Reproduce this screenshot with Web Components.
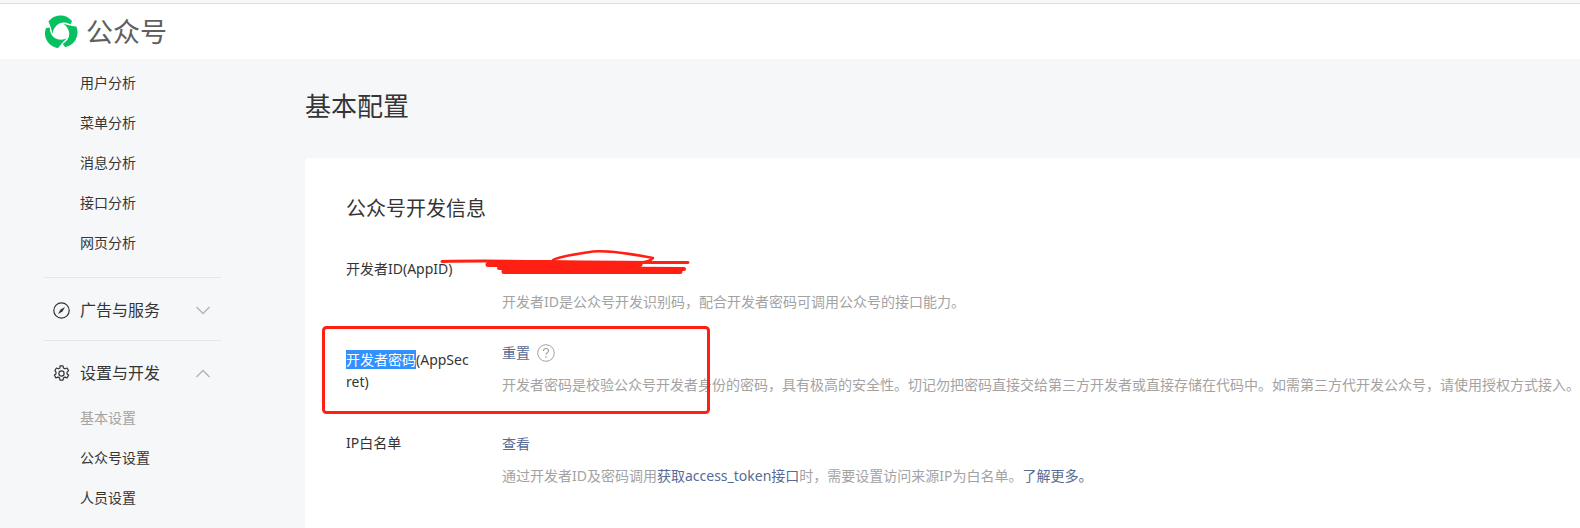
<!DOCTYPE html>
<html lang="zh">
<head>
<meta charset="utf-8">
<title>基本配置</title>
<style>
    html, body {
        margin: 0;
        width: 1580px;
        height: 528px;
        overflow: hidden;
        background: #f6f7f9;
        font-family: "Noto Sans", "Noto Sans CJK SC", sans-serif;
    }
</style>
</head>
<body>
<wx-app></wx-app>

<script>
const FONT = '"Noto Sans", "Noto Sans CJK SC", sans-serif';

class WxHeader extends HTMLElement {
    constructor() {
        super();
        this.attachShadow({ mode: 'open' });
        const swoosh = 'M8.500 19C7.500 14 6 10 4.500 6.500 8 2 12.500 .5 17 .5c4.500 0 8 2 11 5.500l-1.500 3.500C21 6.500 16 7 12.500 10.500 10 13 8.800 16 8.500 19z';
        this.shadowRoot.innerHTML = `
            <style>
                :host {
                    display: flex;
                    align-items: center;
                    box-sizing: border-box;
                    height: 56px;
                    margin-top: 3px;
                    padding: 0 0 0 44px;
                    gap: 8px;
                    background: #fff;
                    border-top: 1px solid #dcdcdc;
                }
                svg { width: 34px; height: 34px; display: block; }
                span { font: 27px/34px ${FONT}; color: #5f5f5f; }
            </style>
            <svg viewBox="0 0 34 34" fill="#07c160">
                <path d="${swoosh}"/>
                <path d="${swoosh}" transform="rotate(120 17 17)"/>
                <path d="${swoosh}" transform="rotate(240 17 17)"/>
                <path d="M7 21l8 6-7 3z"/>
            </svg>
            <span>公众号</span>
        `;
    }
}

class WxNavItem extends HTMLElement {
    constructor() {
        super();
        this.attachShadow({ mode: 'open' });
        this.shadowRoot.innerHTML = `
            <style>
                :host {
                    display: block;
                    height: 40px;
                    padding-left: 80px;
                    font: 14px/40px ${FONT};
                    color: #353535;
                }
                :host([current]) { color: #a3a3a3; }
            </style>
            <slot></slot>
        `;
    }
}

class WxNavGroup extends HTMLElement {
    constructor() {
        super();
        this.attachShadow({ mode: 'open' });
        const up = this.hasAttribute('open');
        this.shadowRoot.innerHTML = `
            <style>
                :host {
                    display: flex;
                    align-items: center;
                    height: 32px;
                    margin-left: 53px;
                    width: 158px;
                    font: 16px/32px ${FONT};
                    color: #353535;
                }
                ::slotted(svg) { width: 17px; height: 17px; margin-right: 10px; flex: none; }
                .label { flex: 1; }
                .chev { width: 16px; height: 9px; flex: none; }
            </style>
            <slot name="icon"></slot>
            <span class="label"><slot></slot></span>
            <svg class="chev" viewBox="0 0 16 9" fill="none" stroke="#b5b5b5" stroke-width="1.500">
                <path d="${up ? 'M1.500 8L8 1.500 14.500 8' : 'M1.500 1L8 7.500 14.500 1'}"/>
            </svg>
        `;
    }
}

class WxSidebar extends HTMLElement {
    constructor() {
        super();
        this.attachShadow({ mode: 'open' });
        this.shadowRoot.innerHTML = `
            <style>
                :host {
                    display: block;
                    flex: none;
                    width: 305px;
                    padding-top: 4px;
                }
                hr {
                    margin: 14px 0 0 44px;
                    width: 177px;
                    height: 1px;
                    border: 0;
                    background: #e4e6e8;
                }
                .group { margin-top: 16px; }
                .subs { margin-top: 9px; }
            </style>
            <wx-nav-item>用户分析</wx-nav-item>
            <wx-nav-item>菜单分析</wx-nav-item>
            <wx-nav-item>消息分析</wx-nav-item>
            <wx-nav-item>接口分析</wx-nav-item>
            <wx-nav-item>网页分析</wx-nav-item>
            <hr>
            <div class="group">
                <wx-nav-group>
                    <svg slot="icon" viewBox="0 0 17 17" fill="none" stroke="#353535" stroke-width="1.200">
                        <circle cx="8.500" cy="8.500" r="7.700"/>
                        <path d="M12 5L9.500 9.500 5 12 7.500 7.500z" fill="#353535" stroke="none"/>
                    </svg>
                    广告与服务
                </wx-nav-group>
            </div>
            <hr>
            <div class="group">
                <wx-nav-group open>
                    <svg slot="icon" viewBox="0 0 17 17" fill="none" stroke="#353535" stroke-width="1.200">
                        <circle cx="8.500" cy="8.500" r="2.600"/>
                        <path d="M7 .8h3l.5 2.200 1.500.8 2.100-.8 1.500 2.600-1.600 1.500v1.700l1.600 1.500-1.500 2.600-2.100-.8-1.500.8-.5 2.200H7l-.5-2.200-1.500-.8-2.100.8-1.500-2.600 1.600-1.500V7.100L1.900 5.600l1.500-2.600 2.100.8 1.500-.8z" stroke-linejoin="round"/>
                    </svg>
                    设置与开发
                </wx-nav-group>
            </div>
            <div class="subs">
                <wx-nav-item current>基本设置</wx-nav-item>
                <wx-nav-item>公众号设置</wx-nav-item>
                <wx-nav-item>人员设置</wx-nav-item>
            </div>
        `;
    }
}

class WxDevRow extends HTMLElement {
    constructor() {
        super();
        this.attachShadow({ mode: 'open' });
        this.shadowRoot.innerHTML = `
            <style>
                :host {
                    display: grid;
                    grid-template-columns: 126px 1fr;
                    column-gap: 30px;
                    font: 14px/23px ${FONT};
                    color: #353535;
                }
                .label { word-break: break-all; line-height: 22px; padding-top: var(--label-top, 0); }
                .value { height: 23px; display: flex; align-items: center; gap: 7px; color: #576b95; }
                .tip { margin-top: 9px; color: #a3a3a3; white-space: nowrap; }
            </style>
            <div class="label"><slot name="label"></slot></div>
            <div>
                <div class="value"><slot name="value"></slot></div>
                <div class="tip"><slot name="tip"></slot></div>
            </div>
        `;
    }
}

class WxCard extends HTMLElement {
    constructor() {
        super();
        this.attachShadow({ mode: 'open' });
        this.shadowRoot.innerHTML = `
            <style>
                :host {
                    display: block;
                    box-sizing: border-box;
                    width: 1400px;
                    height: 400px;
                    padding: 34px 41px 32px;
                    background: #fff;
                    border-radius: 4px;
                }
                h2 {
                    margin: 0 0 32px;
                    font: 400 20px/34px ${FONT};
                    color: #353535;
                }
                .secret { --label-top: 8px; margin-top: 28px; }
                .white { margin-top: 36px; }
                a { color: #576b95; text-decoration: none; }
                mark { background: #3390ff; color: #fff; }
                svg { margin-top: 1px; }
            </style>
            <h2>公众号开发信息</h2>
            <wx-dev-row>
                <span slot="label">开发者ID(AppID)</span>
                <span slot="tip">开发者ID是公众号开发识别码，配合开发者密码可调用公众号的接口能力。</span>
            </wx-dev-row>
            <wx-dev-row class="secret">
                <span slot="label"><mark>开发者密码</mark>(AppSecret)</span>
                <a slot="value">重置</a>
                <svg slot="value" width="18" height="18" viewBox="0 0 18 18" fill="none">
                    <circle cx="9" cy="9" r="8.300" stroke="#a3a3a3"/>
                    <path d="M6.500 7c0-1.500 1.100-2.500 2.500-2.500s2.500 1 2.500 2.300c0 2-2.500 2-2.500 4" stroke="#a3a3a3" stroke-width="1.100"/>
                    <circle cx="9" cy="13" r=".8" fill="#a3a3a3"/>
                </svg>
                <span slot="tip">开发者密码是校验公众号开发者身份的密码，具有极高的安全性。切记勿把密码直接交给第三方开发者或直接存储在代码中。如需第三方代开发公众号，请使用授权方式接入。</span>
            </wx-dev-row>
            <wx-dev-row class="white">
                <span slot="label">IP白名单</span>
                <a slot="value">查看</a>
                <span slot="tip">通过开发者ID及密码调用<a>获取access_token接口</a>时，需要设置访问来源IP为白名单。<a>了解更多。</a></span>
            </wx-dev-row>
        `;
    }
}

class WxMarks extends HTMLElement {
    constructor() {
        super();
        this.attachShadow({ mode: 'open' });
        this.shadowRoot.innerHTML = `
            <style>
                :host { position: absolute; left: 0; top: 0; width: 1580px; height: 528px; pointer-events: none; }
                svg { display: block; }
            </style>
            <svg width="1580" height="528" fill="none" stroke="#ff2013" stroke-linecap="round" stroke-linejoin="round">
                <path d="M442 261.500C490 260 540 262 688 262.500" stroke-width="3"/>
                <path d="M553 260C560 256 575 254.500 593 251.500C610 250.500 632 254 653 258C651 261 646 262 640 262.500" stroke-width="2.500"/>
                <path d="M488 264.500L640 264.500" stroke-width="5"/>
                <path d="M499 268L684 269" stroke-width="4"/>
                <path d="M504 271.500L680 271.500" stroke-width="5"/>
                <rect x="323.500" y="327.500" width="385" height="85" rx="3" stroke-width="3"/>
            </svg>
        `;
    }
}

class WxApp extends HTMLElement {
    constructor() {
        super();
        this.attachShadow({ mode: 'open' });
        this.shadowRoot.innerHTML = `
            <style>
                :host { display: block; position: relative; width: 1580px; height: 528px; overflow: hidden; }
                .body { display: flex; }
                main { flex: 1; min-width: 0; }
                h1 {
                    margin: 0;
                    padding-top: 27px;
                    height: 72px;
                    font: 400 26px/40px ${FONT};
                    color: #353535;
                }
            </style>
            <wx-header></wx-header>
            <div class="body">
                <wx-sidebar></wx-sidebar>
                <main>
                    <h1>基本配置</h1>
                    <wx-card></wx-card>
                </main>
            </div>
            <wx-marks></wx-marks>
        `;
    }
}

customElements.define('wx-header', WxHeader);
customElements.define('wx-nav-item', WxNavItem);
customElements.define('wx-nav-group', WxNavGroup);
customElements.define('wx-sidebar', WxSidebar);
customElements.define('wx-dev-row', WxDevRow);
customElements.define('wx-card', WxCard);
customElements.define('wx-marks', WxMarks);
customElements.define('wx-app', WxApp);
</script>
</body>
</html>
